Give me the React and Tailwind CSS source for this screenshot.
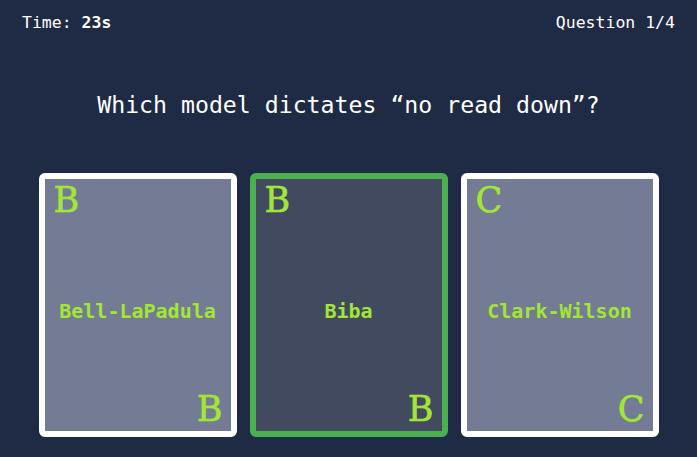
const cards = [
  { letter: "B", label: "Bell-LaPadula", selected: false },
  { letter: "B", label: "Biba", selected: true },
  { letter: "C", label: "Clark-Wilson", selected: false },
];

function Card({ letter, label, selected }) {
  return (
    <div
      className={
        selected
          ? "flex h-[264px] w-[198px] flex-col rounded-md border-[6px] border-[#4caf50] bg-[#414a5e]"
          : "flex h-[264px] w-[198px] flex-col rounded-md border-[6px] border-white bg-[#737c94]"
      }
    >
      <div className="pl-[9px] pt-[4px] text-left font-['DejaVu_Serif',serif] text-[35px] leading-none text-[#a3e635] [-webkit-text-stroke:0.6px_#a3e635]">
        {letter}
      </div>
      <div className="flex flex-1 items-center justify-center pt-[11px] text-[20px] font-bold leading-7 text-[#a3e635]">
        {label}
      </div>
      <div className="pb-[4px] pr-[8px] text-right font-['DejaVu_Serif',serif] text-[35px] leading-none text-[#a3e635] [-webkit-text-stroke:0.6px_#a3e635]">
        {letter}
      </div>
    </div>
  );
}

export default function App() {
  return (
    <div className="flex min-h-screen flex-col bg-[#1f2a44] font-['DejaVu_Sans_Mono',monospace] text-white">
      <div className="flex items-center justify-between px-[22px] pt-[11px] text-[16.5px] leading-6">
        <span>
          Time: <span className="font-bold">23s</span>
        </span>
        <span>Question 1/4</span>
      </div>

      <h1 className="mt-[53px] text-center text-[23.2px] leading-[34px]">
        Which model dictates “no read down”?
      </h1>

      <div className="mt-[51px] flex justify-center gap-[13px]">
        {cards.map((c, i) => (
          <Card key={i} {...c} />
        ))}
      </div>
    </div>
  );
}
